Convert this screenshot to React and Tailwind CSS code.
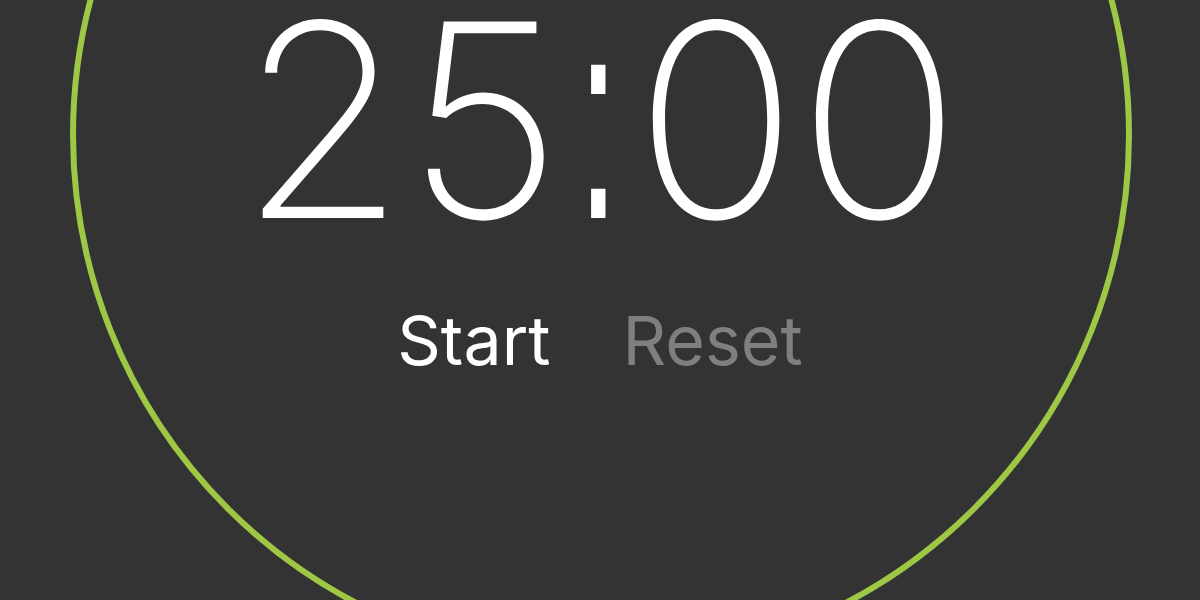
import React from 'react';

const App = () => {
  return (
    <div className="relative w-full h-[600px] overflow-hidden bg-[#333333] font-['Inter','Liberation_Sans',sans-serif]">
      {/* timer ring */}
      <div className="absolute left-[70px] top-[-396px] w-[1062px] h-[1062px] rounded-full border-[6px] border-[#9dc744]" />

      <div className="relative flex flex-col items-center">
        <div className="text-[270px] leading-[240px] font-[250] text-white whitespace-nowrap">
          25
          <span className="inline-block mx-[-4px] leading-[0] font-['Liberation_Sans',sans-serif] font-normal text-[290px] scale-x-[0.52]">:</span>
          00
        </div>
        <div className="mt-[66px] flex items-center gap-[72px] text-[68px] leading-none">
          <button className="text-white">Start</button>
          <button className="text-[#7f7f7f]">Reset</button>
        </div>
      </div>
    </div>
  );
};

export default App;
